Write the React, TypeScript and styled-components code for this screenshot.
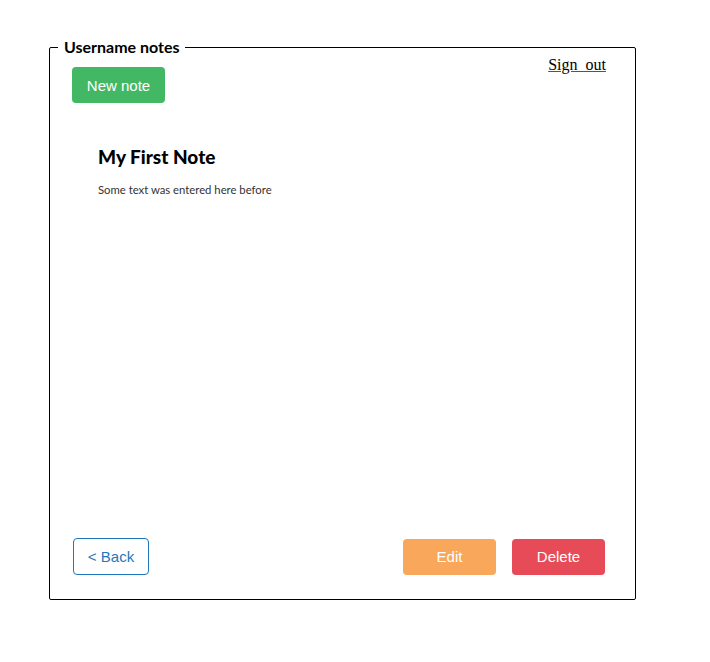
import React from "react";
import styled, { createGlobalStyle } from "styled-components";

const GlobalStyle = createGlobalStyle`
  body {
    margin: 0;
    background: #fff;
    font-family: "Liberation Sans", Arial, sans-serif;
  }
`;

const Page = styled.div`
  padding: 37px 0 0 49px;
`;

const Panel = styled.fieldset`
  width: 587px;
  box-sizing: border-box;
  margin: 0;
  padding: 0 29px 0 22px;
  border: 1px solid #000;
  border-radius: 2px;
`;

const Legend = styled.legend`
  margin-left: -14px;
  padding: 0 5px 0 6px;
  font-family: Lato, "Noto Sans", sans-serif;
  font-weight: 700;
  font-size: 16px;
  line-height: 20px;
  color: #000;
`;

const Inner = styled.div`
  height: 542px;
  display: flex;
  flex-direction: column;
`;

const Header = styled.div`
  display: flex;
  justify-content: space-between;
  align-items: flex-start;
`;

const SignOut = styled.a`
  font-family: "Liberation Serif", "Times New Roman", serif;
  font-size: 16px;
  line-height: 16px;
  color: #000;
  word-spacing: 4px;
  text-decoration: underline;
  text-decoration-color: #555;
  cursor: pointer;
`;

const Button = styled.button<{ $bg: string }>`
  height: 36px;
  min-width: 93px;
  padding: 0 14px;
  border: none;
  border-radius: 4px;
  background: ${(p) => p.$bg};
  color: #fff;
  font-family: "Liberation Sans", Arial, sans-serif;
  font-size: 15px;
  cursor: pointer;
`;

const NewButton = styled(Button)`
  margin-top: 10px;
`;

const OutlineButton = styled.button`
  height: 37px;
  width: 76px;
  border: 1px solid #1f77bd;
  border-radius: 4px;
  background: #fff;
  color: #1f77bd;
  font-family: "Liberation Sans", Arial, sans-serif;
  font-size: 15px;
  cursor: pointer;
`;

const Note = styled.div`
  padding: 42px 0 0 26px;
  flex: 1;
`;

const NoteTitle = styled.h2`
  margin: 0;
  font-family: Lato, "Noto Sans", sans-serif;
  font-weight: 900;
  font-size: 19px;
  line-height: 24px;
  color: #000;
`;

const NoteText = styled.p`
  margin: 14px 0 0;
  font-family: Lato, "Noto Sans", sans-serif;
  font-size: 11.3px;
  color: #333;
`;

const Footer = styled.div`
  display: flex;
  align-items: center;
  gap: 16px;
  padding: 0 1px 24px 1px;
`;

const Spacer = styled.div`
  flex: 1;
`;

export default function App() {
  return (
    <>
      <GlobalStyle />
      <Page>
        <Panel>
          <Legend>Username notes</Legend>
          <Inner>
            <Header>
              <NewButton $bg="#43b864">New note</NewButton>
              <SignOut>Sign out</SignOut>
            </Header>
            <Note>
              <NoteTitle>My First Note</NoteTitle>
              <NoteText>Some text was entered here before</NoteText>
            </Note>
            <Footer>
              <OutlineButton>&lt; Back</OutlineButton>
              <Spacer />
              <Button $bg="#f9a75b">Edit</Button>
              <Button $bg="#e84b58">Delete</Button>
            </Footer>
          </Inner>
        </Panel>
      </Page>
    </>
  );
}
